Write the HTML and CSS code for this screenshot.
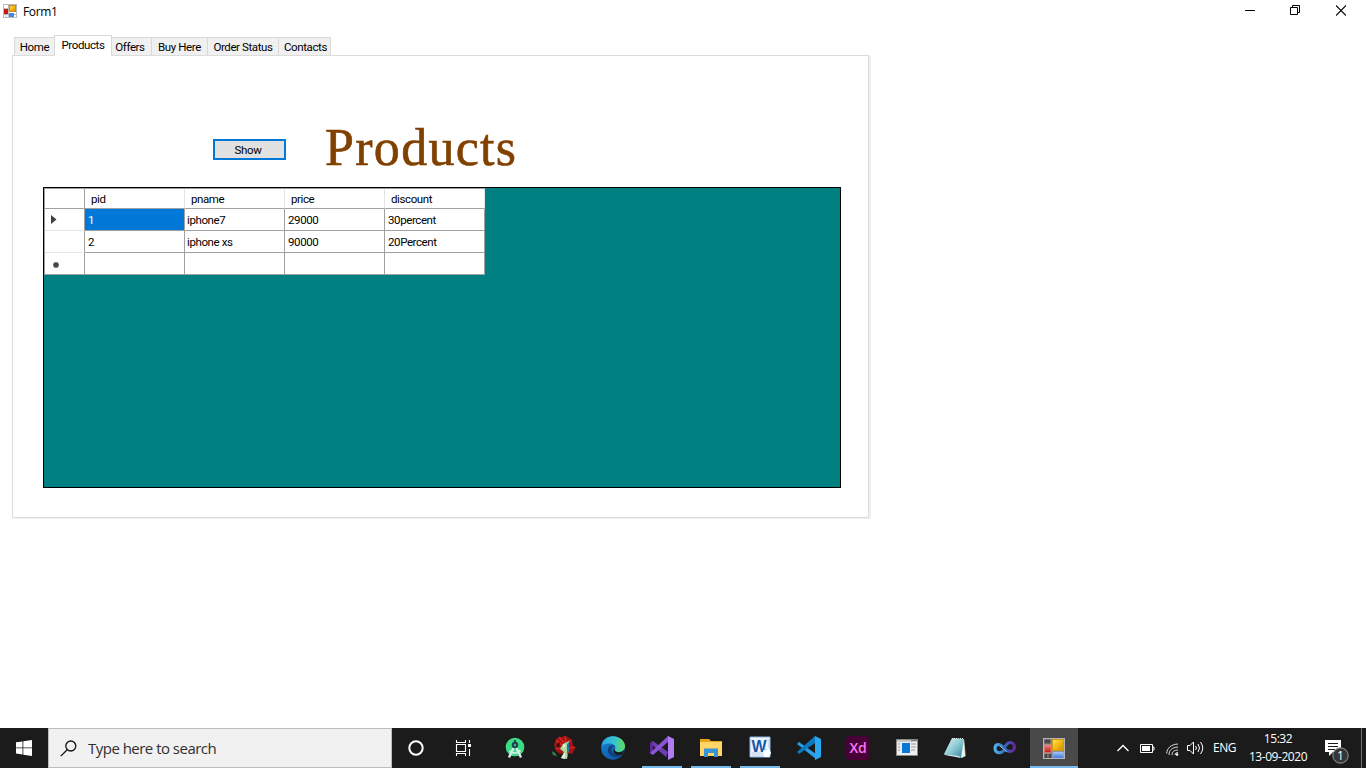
FILE: index.html
```html
<!DOCTYPE html>
<html lang="en">
<head>
<meta charset="utf-8">
<title>Form1</title>
<link rel="stylesheet" href="styles.css">
</head>
<body>
<svg class="defs" width="0" height="0">
  <defs>
    <linearGradient id="edgeA" x1="0" y1="0" x2="1" y2="0"><stop offset="0" stop-color="#2aa5dc"/><stop offset=".5" stop-color="#35c1d8"/><stop offset="1" stop-color="#61dc5c"/></linearGradient>
    <linearGradient id="edgeB" x1="0" y1="0" x2="1" y2="1"><stop offset="0" stop-color="#1688d8"/><stop offset="1" stop-color="#0d4a98"/></linearGradient>
    <linearGradient id="gold" x1="0" y1="0" x2="1" y2="1"><stop offset="0" stop-color="#ffe46a"/><stop offset=".5" stop-color="#f3b90e"/><stop offset="1" stop-color="#c98a00"/></linearGradient>
    <linearGradient id="red" x1="0" y1="0" x2="0" y2="1"><stop offset="0" stop-color="#f2837c"/><stop offset="1" stop-color="#c41616"/></linearGradient>
    <linearGradient id="blue" x1="0" y1="0" x2="0" y2="1"><stop offset="0" stop-color="#a9cbff"/><stop offset="1" stop-color="#3c70dd"/></linearGradient>
    <linearGradient id="note" x1="0" y1="0" x2="1" y2="1"><stop offset="0" stop-color="#e3f4f6"/><stop offset=".5" stop-color="#8ccbd5"/><stop offset="1" stop-color="#2e7f91"/></linearGradient>
    <linearGradient id="loop" x1="0" y1="0" x2="1" y2="0"><stop offset="0" stop-color="#4bb5ee"/><stop offset=".5" stop-color="#3568b8"/><stop offset="1" stop-color="#6626a5"/></linearGradient>
    <symbol id="form" viewBox="0 0 22 21">
      <rect x=".5" y=".5" width="21" height="20" fill="#8c8c8c" stroke="#b5b5b5"/>
      <path d="M1.500 1.500h6v4h-6zM1.500 16h3v4h-3zM5.500 16h3v4h-3z" fill="#4a4a4a"/>
      <rect x="9.500" y="1.500" width="11" height="11" fill="url(#gold)" stroke="#d09a10"/>
      <rect x="1.500" y="7" width="6.500" height="7.500" fill="url(#red)" stroke="#ef8a84" stroke-width=".6"/>
      <rect x="10" y="14" width="10.500" height="6" fill="url(#blue)" stroke="#84aef5" stroke-width=".6"/>
    </symbol>
  </defs>
</svg>
<header class="titlebar">
  <svg class="app-icon" width="14" height="14" viewBox="0 0 14 14"><rect x=".5" y=".5" width="13" height="13" fill="#fff" stroke="#bbb"/><path d="M5.500 1v12M1 4.500h5M1 10.500h12M3 10v3" stroke="#bbb"/><rect x="6.500" y="1.500" width="6" height="6" fill="url(#gold)" stroke="#c98d08"/><rect x="1" y="5" width="4" height="5" fill="#c51d16"/><rect x="6" y="9" width="5" height="4" fill="#4785e8"/></svg>
  <span class="caption">Form1</span>
  <div class="controls">
    <svg width="10" height="11" viewBox="0 0 10 11"><path d="M0 5.500h10" stroke="#000"/></svg>
    <svg width="10" height="11" viewBox="0 0 10 11"><path d="M.5 2.500h7v7h-7zM2.500 2.500v-2h7v7h-2" fill="none" stroke="#000"/></svg>
    <svg width="10" height="11" viewBox="0 0 10 11"><path d="M0 .5l10 10M10 .5l-10 10" stroke="#000" stroke-width="1.100"/></svg>
  </div>
</header>
<main class="workspace">
  <nav class="tabs">
    <span class="tab t-home">Home</span><span class="tab active">Products</span><span class="tab t-offers">Offers</span><span class="tab t-buy">Buy Here</span><span class="tab t-order">Order Status</span><span class="tab t-contacts">Contacts</span>
  </nav>
  <section class="panel">
    <div class="heading"><button class="show">Show</button><h1>Products</h1></div>
    <div class="grid">
      <div class="table">
        <div class="rh head"></div><div class="head">pid</div><div class="head">pname</div><div class="head">price</div><div class="head">discount</div>
        <div class="rh"><svg width="6" height="9" viewBox="0 0 6 9"><path d="M0 0l5.500 4.500L0 9z" fill="#404040"/></svg></div><div class="cell num selected">1</div><div class="cell">iphone7</div><div class="cell num">29000</div><div class="cell num">30percent</div>
        <div class="rh"></div><div class="cell num">2</div><div class="cell">iphone xs</div><div class="cell num">90000</div><div class="cell num">20Percent</div>
        <div class="rh last"><svg class="star" width="6" height="6" viewBox="0 0 6 6"><path d="M3 0v6M0 3h6M.8.8l4.400 4.400M5.200.8L.8 5.200" stroke="#404040" stroke-width="1.300"/></svg></div><div class="cell"></div><div class="cell"></div><div class="cell"></div><div class="cell"></div>
      </div>
    </div>
  </section>
</main>
<footer class="taskbar">
  <div class="start"><svg width="16" height="16" viewBox="0 0 16 16"><path d="M0 2.300l6.500-.9v6.100H0zM7.300 1.200L16 0v7.500H7.300zM0 8.300h6.500v6.200L0 13.600zM7.300 8.300H16V16l-8.700-1.300z" fill="#fff"/></svg></div>
  <div class="search"><svg width="17" height="17" viewBox="0 0 17 17"><circle cx="10.800" cy="6" r="5" fill="none" stroke="#111" stroke-width="1.300"/><path d="M7.200 9.700L.8 16.100" stroke="#111" stroke-width="1.300"/></svg><span>Type here to search</span></div>
  <div class="sys"><svg width="16" height="16" viewBox="0 0 16 16"><circle cx="8" cy="8" r="6.700" fill="none" stroke="#fff" stroke-width="2"/></svg></div>
  <div class="sys"><svg class="taskview" width="17" height="16" viewBox="0 0 17 16"><path d="M1.500 0v2.500h9V0M1.500 16v-2.500h9V16M1.500 4.500h9v7h-9zM14.500 0v3M14.500 9v7" fill="none" stroke="#fff" stroke-width="1.100"/><path d="M13 4h3v3h-3z" fill="#fff"/></svg></div>
  <div class="apps">
    <div class="app"><svg width="20" height="22" viewBox="0 0 20 22"><circle cx="10" cy="10" r="9.300" fill="#3ddc84"/><path d="M8.500 11L4 20.500M11.500 11L16 20.500" stroke="#d9e9ed" stroke-width="2.400"/><path d="M4.500 14q5.500 4.500 11-.5" fill="none" stroke="#d0ebe6" stroke-width="1.700"/><circle cx="10" cy="8" r="3.300" fill="#1d4558"/><path d="M10 3v3" stroke="#1d4558" stroke-width="2"/><circle cx="10" cy="8" r="1.200" fill="#42b986"/></svg></div>
    <div class="app"><svg width="24" height="24" viewBox="0 0 24 24"><path d="M2 8L5 2l9-2 6 4 1 6 3 1-4 7-5-1-7 1-4-3z" fill="#a51414"/><path d="M4 4l6 5M7 1l6 7M13 0l1 7M19 4l-5 5M22 11l-7 2M3 13l6-1" stroke="#e32920" stroke-width="1.200"/><path d="M4 9l4-3-1 6z" fill="#350b0b"/><path d="M11 8l6-3v7l-2 11-6-1 3-6-4-3z" fill="#a9dc9d"/><path d="M11 8l3 1-3 4zM9 22l4-6v7z" fill="#e7eedf"/><path d="M17 6v8l-2 6V8z" fill="#2374b8"/><path d="M0 15l3 2 2 3-4-1z" fill="#398d43"/></svg></div>
    <div class="app"><svg width="24" height="24" viewBox="0 0 24 24"><circle cx="12" cy="12" r="11.800" fill="url(#edgeB)"/><path d="M.5 10C1 4 6 .2 12 .2S24 4.500 24 10c0 4-3 6-6.500 6S13 14.500 14 13s.5-5-5-5.500C5 7.300 2 8.500.5 10z" fill="url(#edgeA)"/><path d="M9 10c-5 4-1 11 6 11 4 0 6-2 7.500-4-3 2-13 3-12-4 .2-2 1.500-3 3.400-2C13 9 11 8.500 9 10z" fill="#103f79"/><path d="M14 12.500c-1 2 .7 3.500 3.500 3.700 3 .2 4.500-1 5.500-2.200l-.8 4c-2 1.400-10 1.800-9.700-3.200.1-1.300.8-2 1.500-2.300z" fill="#1b1b1b"/></svg></div>
    <div class="app open"><svg width="24" height="24" viewBox="0 0 24 24"><path d="M0 7l3-2 15 11-2 5z" fill="#6e3db4"/><path d="M0 7v10l3 2V5z" fill="#5b2c91"/><path d="M3 19L19 5l-1-5L0 17z" fill="#8a55d2"/><path d="M18 0l6 3v18l-6 3z" fill="#b17cf0"/></svg></div>
    <div class="app open"><svg width="22" height="20" viewBox="0 0 22 20"><path d="M0 1h9l2 2h11v15H0z" fill="#e6a516"/><path d="M0 4h22v14H0z" fill="#ffd566"/><path d="M4 10.500h14V19h-4v-4H8v4H4z" fill="#3994d7"/></svg></div>
    <div class="app open"><svg class="word" width="22" height="22" viewBox="0 0 22 22"><path d="M1 1h20v20H1z" fill="#edf4fc" stroke="#8ab6e5"/><path d="M16 4h4v10h-4M3 17h12M3 19h12" fill="none" stroke="#bed1e6"/><text x="2.500" y="15.500" textLength="15" lengthAdjust="spacingAndGlyphs" class="word-letter">W</text><path d="M14 14l3 1 3-3 2 5-2 4h-5z" fill="#fff"/></svg></div>
    <div class="app"><svg width="24" height="24" viewBox="0 0 24 24"><path d="M0 8l2-2 17 12v5z" fill="#24a0ec"/><path d="M0 16L18 0v7L2 18z" fill="#087bc0"/><path d="M18 0l6 3v18l-6 3z" fill="#2aa8f2"/></svg></div>
    <div class="app"><div class="xd">Xd</div></div>
    <div class="app"><svg class="window" width="22" height="17" viewBox="0 0 22 17"><path d="M.5.5h21v16H.5z" fill="#eee" stroke="#888"/><path d="M1 1h20v2H1z" fill="#c7c7c7"/><path d="M16 1v1M18 1v1M20 1v1" stroke="#333"/><path d="M6 4h8v10H6z" fill="#0877d8"/><path d="M2 5h2M2 8h2M2 11h2M15 5h5M15 8h5M15 11h4" stroke="#999"/></svg></div>
    <div class="app"><svg class="notepad" width="23" height="22" viewBox="0 0 23 22"><path d="M20 2l2 17-4 2z" fill="#9b865e"/><path d="M8 1l12 1-1 19-19-4z" fill="url(#note)"/><path d="M20 2l1 17-4 2z" fill="#edf8f8"/><path d="M0 17l15 2 2 2-16-3z" fill="#cde7e8"/><path d="M8 1.500h12" stroke="#ddd" stroke-dasharray="1 1"/></svg></div>
    <div class="app"><svg class="infinity" width="24" height="14" viewBox="0 0 24 14"><path d="M12 8.500C9 12 7 12 5 11.500 1 10.500 1 4 5 3.500c5-.5 7 7 12 7 6 0 6-9 0-9-3 0-4 3-6 5.500" fill="none" stroke="url(#loop)" stroke-width="3"/><path d="M7 5l7 6" stroke="#77c6ec"/></svg></div>
    <div class="app open current"><svg width="22" height="21"><use href="#form"/></svg></div>
  </div>
  <div class="tray">
    <svg class="chev" width="12" height="8" viewBox="0 0 12 8"><path d="M.5 7L6 1.500 11.500 7" fill="none" stroke="#fff" stroke-width="1.300"/></svg>
    <svg class="battery" width="15" height="10" viewBox="0 0 15 10"><path d="M.5.5h12v8H.5zM12.500 3h1.500v3h-1.500" fill="none" stroke="#fff"/><path d="M2 2h8v5H2z" fill="#fff"/></svg>
    <svg class="wifi" width="13" height="13" viewBox="0 0 13 13"><path d="M.7 10.500C1 5 5 1.500 12 1M3 12C3 7 6 4.500 12 4M6 12c0-3 2-5 6-5M9 12c0-1.500 1-2.500 3-2.500" fill="none" stroke="#ddd"/><circle cx="11" cy="11.500" r="1.300" fill="#fff"/></svg>
    <svg class="volume" width="17" height="14" viewBox="0 0 17 14"><path d="M.5 4.500h2.500L6.500 1v12L3 9.500H.5zM8.500 5q2 2 0 4M11 3q3 4 0 8M13.500 1q4.500 6 0 12" fill="none" stroke="#fff"/></svg>
    <span class="lang">ENG</span>
    <div class="clock"><span class="time">15:32</span><span class="date">13-09-2020</span></div>
    <div class="notice"><svg width="24" height="24" viewBox="0 0 24 24"><path d="M0 0h16v12H8l-4 4v-4H0z" fill="#fff"/><path d="M3 3.500h10M3 6.500h10M3 9.500h7" stroke="#1b1b1b"/><circle cx="15.500" cy="15.500" r="7.700" fill="#363636" stroke="#999"/><text x="15.500" y="19.500" text-anchor="middle" class="badge">1</text></svg></div>
    <div class="peek"></div>
  </div>
</footer>
</body>
</html>
```
FILE: styles.css
```css
* { box-sizing: border-box; }
body { margin: 0; width: 1366px; height: 768px; display: flex; flex-direction: column; overflow: hidden; background: #fff; color: #000; font-family: Roboto, "Liberation Sans", sans-serif; font-size: 11.5px; }
svg { display: block; flex: none; }
.defs { position: absolute; }
.titlebar { height: 35px; display: flex; align-items: flex-start; padding: 4px 20px 0 3px; }
.caption { margin-left: 6px; font: 12px/16px "Open Sans", sans-serif; letter-spacing: -.35px; }
.controls { margin-left: auto; display: flex; gap: 35px; padding-top: 1px; }
.controls svg:nth-child(-n+2) { margin-left: -1px; margin-right: 1px; }
.controls svg:nth-child(2) { margin-left: -1px; }
.workspace { flex: 1; padding-left: 12px; }
.tabs { display: flex; align-items: flex-end; height: 21px; padding-left: 2px; position: relative; z-index: 1; }
.tab { height: 18px; margin-bottom: 1px; border: 1px solid #d9d9d9; border-bottom: 0; border-left: 0; background: #f0f0f0; line-height: 19px; text-align: center; white-space: nowrap; letter-spacing: -.4px; }
.t-home { width: 40px; border-left: 1px solid #d9d9d9; border-right: 0; }
.active { width: 58px; height: 21px; margin-bottom: 0; border-left: 1px solid #d9d9d9; background: #fff; line-height: 19px; }
.t-offers { width: 40px; padding-right: 3px; }
.t-buy { width: 56px; }
.t-order { width: 71px; }
.t-contacts { width: 52px; padding-left: 2px; }
.panel { width: 857px; height: 463px; margin-top: -1px; border: 1px solid #dcdcdc; box-shadow: 2px 1px 0 #f0f0f0; padding: 69px 0 0 30px; }
.heading { display: flex; height: 62px; padding-left: 170px; }
.show { width: 73px; height: 21px; margin-top: 14px; padding: 1px 3px 0 0; border: 2px solid #0078d7; border-radius: 0; background: #e1e1e1; color: #000; font: 11.5px/16px Roboto, sans-serif; letter-spacing: -.3px; }
h1 { margin: -3px 0 0 39px; color: #804000; font: 52px/52px "Liberation Serif", serif; letter-spacing: 1.3px; white-space: nowrap; -webkit-text-stroke: .6px #804000; }
.grid { width: 798px; height: 301px; border: 1px solid #000; background: #008080; }
.table { width: 441px; display: grid; grid-template-columns: 40px repeat(4, 100px); grid-template-rows: 20px 22px 22px 22px; background: #fff; border-top: 1px solid #a0a0a0; border-left: 1px solid #a0a0a0; letter-spacing: -.4px; }
.table > div { border-right: 1px solid #a0a0a0; border-bottom: 1px solid #a0a0a0; }
.table .head { padding-left: 6px; line-height: 20px; border-right-color: #e5e5e5; }
.table .rh { border-right-color: #a0a0a0; border-bottom-color: #e5e5e5; display: flex; align-items: center; padding-left: 6px; }
.table .rh.head, .table .rh.last { border-bottom-color: #a0a0a0; }
.star { margin: 3px 0 0 2px; }
.cell { padding-left: 2px; line-height: 22px; }
.table .num { padding-left: 3px; }
.selected { background: #0078d7; color: #fff; }
.taskbar { height: 40px; display: flex; background: #1b1b1b; color: #fff; }
.start { width: 48px; display: flex; align-items: center; justify-content: center; }
.search { width: 344px; display: flex; align-items: center; gap: 11px; padding-left: 11px; background: #f1f1f1; border: 1px solid #bdbdbd; color: #303030; font: 15px/20px "Open Sans", sans-serif; letter-spacing: -.52px; }
.sys { width: 48px; display: flex; align-items: center; justify-content: center; }
.taskview { margin-right: 1px; }
.apps { display: flex; gap: 1px; margin-left: 3px; }
.app { width: 48px; height: 40px; display: flex; align-items: center; justify-content: center; border-bottom: 2px solid transparent; padding-top: 2px; }
.open { width: 40px; margin: 0 4px; border-bottom-color: #76b9ed; }
.current { width: 48px; margin: 0; background: #494949; }
.word { margin: -2px 1px 0 0; }
.notepad { margin-right: 2px; }
.window { margin-top: -1px; }
.infinity { margin-right: 1px; }
.word-letter { font: bold 17px "Liberation Sans", sans-serif; fill: #1957ad; }
.xd { width: 24px; height: 24px; border-radius: 4px; background: #470137; color: #ff72f8; font: 600 14px/23px "Open Sans", sans-serif; text-align: center; letter-spacing: -.3px; }
.tray { flex: 1; display: flex; align-items: center; padding-left: 39px; }
.battery { margin: 1px 0 0 11px; }
.wifi { margin: 2px 0 0 11px; }
.volume { margin-left: 8px; }
.lang { width: 24px; margin-left: 9px; font: 12px/18px "Open Sans", sans-serif; letter-spacing: -.5px; white-space: nowrap; }
.clock { width: 60px; margin-left: 11px; display: flex; flex-direction: column; text-align: center; font: 12px/18px "Open Sans", sans-serif; letter-spacing: -.45px; white-space: nowrap; }
.notice { margin: 8px 0 0 17px; }
.badge { font: 12px "Open Sans", sans-serif; fill: #fff; }
.peek { width: 1px; height: 40px; margin-left: auto; margin-right: 4px; background: #707070; }
```
